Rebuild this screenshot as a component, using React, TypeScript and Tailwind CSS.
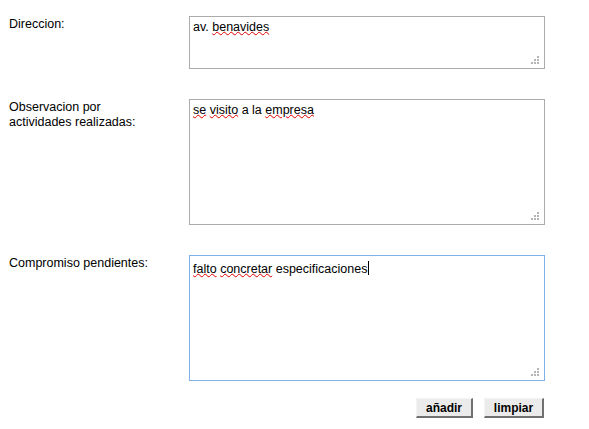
import React from "react";

const font = "font-['Liberation_Sans',Arial,sans-serif]";

const Misspelled = ({ children }: { children: React.ReactNode }) => (
  <span className="underline decoration-wavy decoration-[#e00000] decoration-1 underline-offset-[0px]">
    {children}
  </span>
);

const Grip = () => (
  <svg className="absolute bottom-[4px] right-[5px]" width="8" height="8" viewBox="0 0 8 8">
    <rect x="6" y="0" width="2" height="2" fill="#b4b4b4" />
    <rect x="3" y="3" width="2" height="2" fill="#b4b4b4" />
    <rect x="6" y="3" width="2" height="2" fill="#b4b4b4" />
    <rect x="0" y="6" width="2" height="2" fill="#b4b4b4" />
    <rect x="3" y="6" width="2" height="2" fill="#b4b4b4" />
    <rect x="6" y="6" width="2" height="2" fill="#b4b4b4" />
  </svg>
);

type Field = {
  label: string[];
  height: string;
  focused?: boolean;
  content: React.ReactNode;
};

const fields: Field[] = [
  {
    label: ["Direccion:"],
    height: "h-[53px]",
    content: (
      <>
        av. <Misspelled>benavides</Misspelled>
      </>
    ),
  },
  {
    label: ["Observacion por", "actividades realizadas:"],
    height: "h-[126px]",
    content: (
      <>
        <Misspelled>se</Misspelled> <Misspelled>visito</Misspelled> a la <Misspelled>empresa</Misspelled>
      </>
    ),
  },
  {
    label: ["Compromiso pendientes:"],
    height: "h-[126px]",
    focused: true,
    content: (
      <>
        <Misspelled>falto</Misspelled> <Misspelled>concretar</Misspelled> especificaciones
        <span className="ml-[1px] inline-block h-[14px] w-px translate-y-[2px] bg-black align-baseline" />
      </>
    ),
  },
];

export default function App() {
  return (
    <div className={`${font} min-h-[429px] w-[589px] bg-white pt-[16px] text-black`}>
      <div className="flex flex-col gap-[30px]">
        {fields.map((f, i) => (
          <div key={i} className="flex">
            <div className="w-[189px] pl-[9px] pt-[1px] text-[12.5px] leading-[15px]">
              {f.label.map((l) => (
                <div key={l}>{l}</div>
              ))}
            </div>
            <div
              className={`relative w-[356px] ${f.height} border ${
                f.focused ? "border-[#7fb0e8]" : "border-[#ababab]"
              } px-[3px] pt-[3px] text-[12.5px] leading-[15px]`}
            >
              {f.content}
              <Grip />
            </div>
          </div>
        ))}
      </div>
      <div className="mt-[17px] flex w-[545px] justify-end gap-[11px] pr-[1px]">
        <button className="h-[20px] w-[57px] border border-t-[#f4f4f4] border-l-[#f4f4f4] border-r-2 border-b-2 border-r-[#707070] border-b-[#707070] bg-[#ebebeb] text-[12px] font-bold leading-[16px]">
          añadir
        </button>
        <button className="h-[20px] w-[60px] border border-t-[#f4f4f4] border-l-[#f4f4f4] border-r-2 border-b-2 border-r-[#707070] border-b-[#707070] bg-[#ebebeb] text-[12px] font-bold leading-[16px]">
          limpiar
        </button>
      </div>
    </div>
  );
}
